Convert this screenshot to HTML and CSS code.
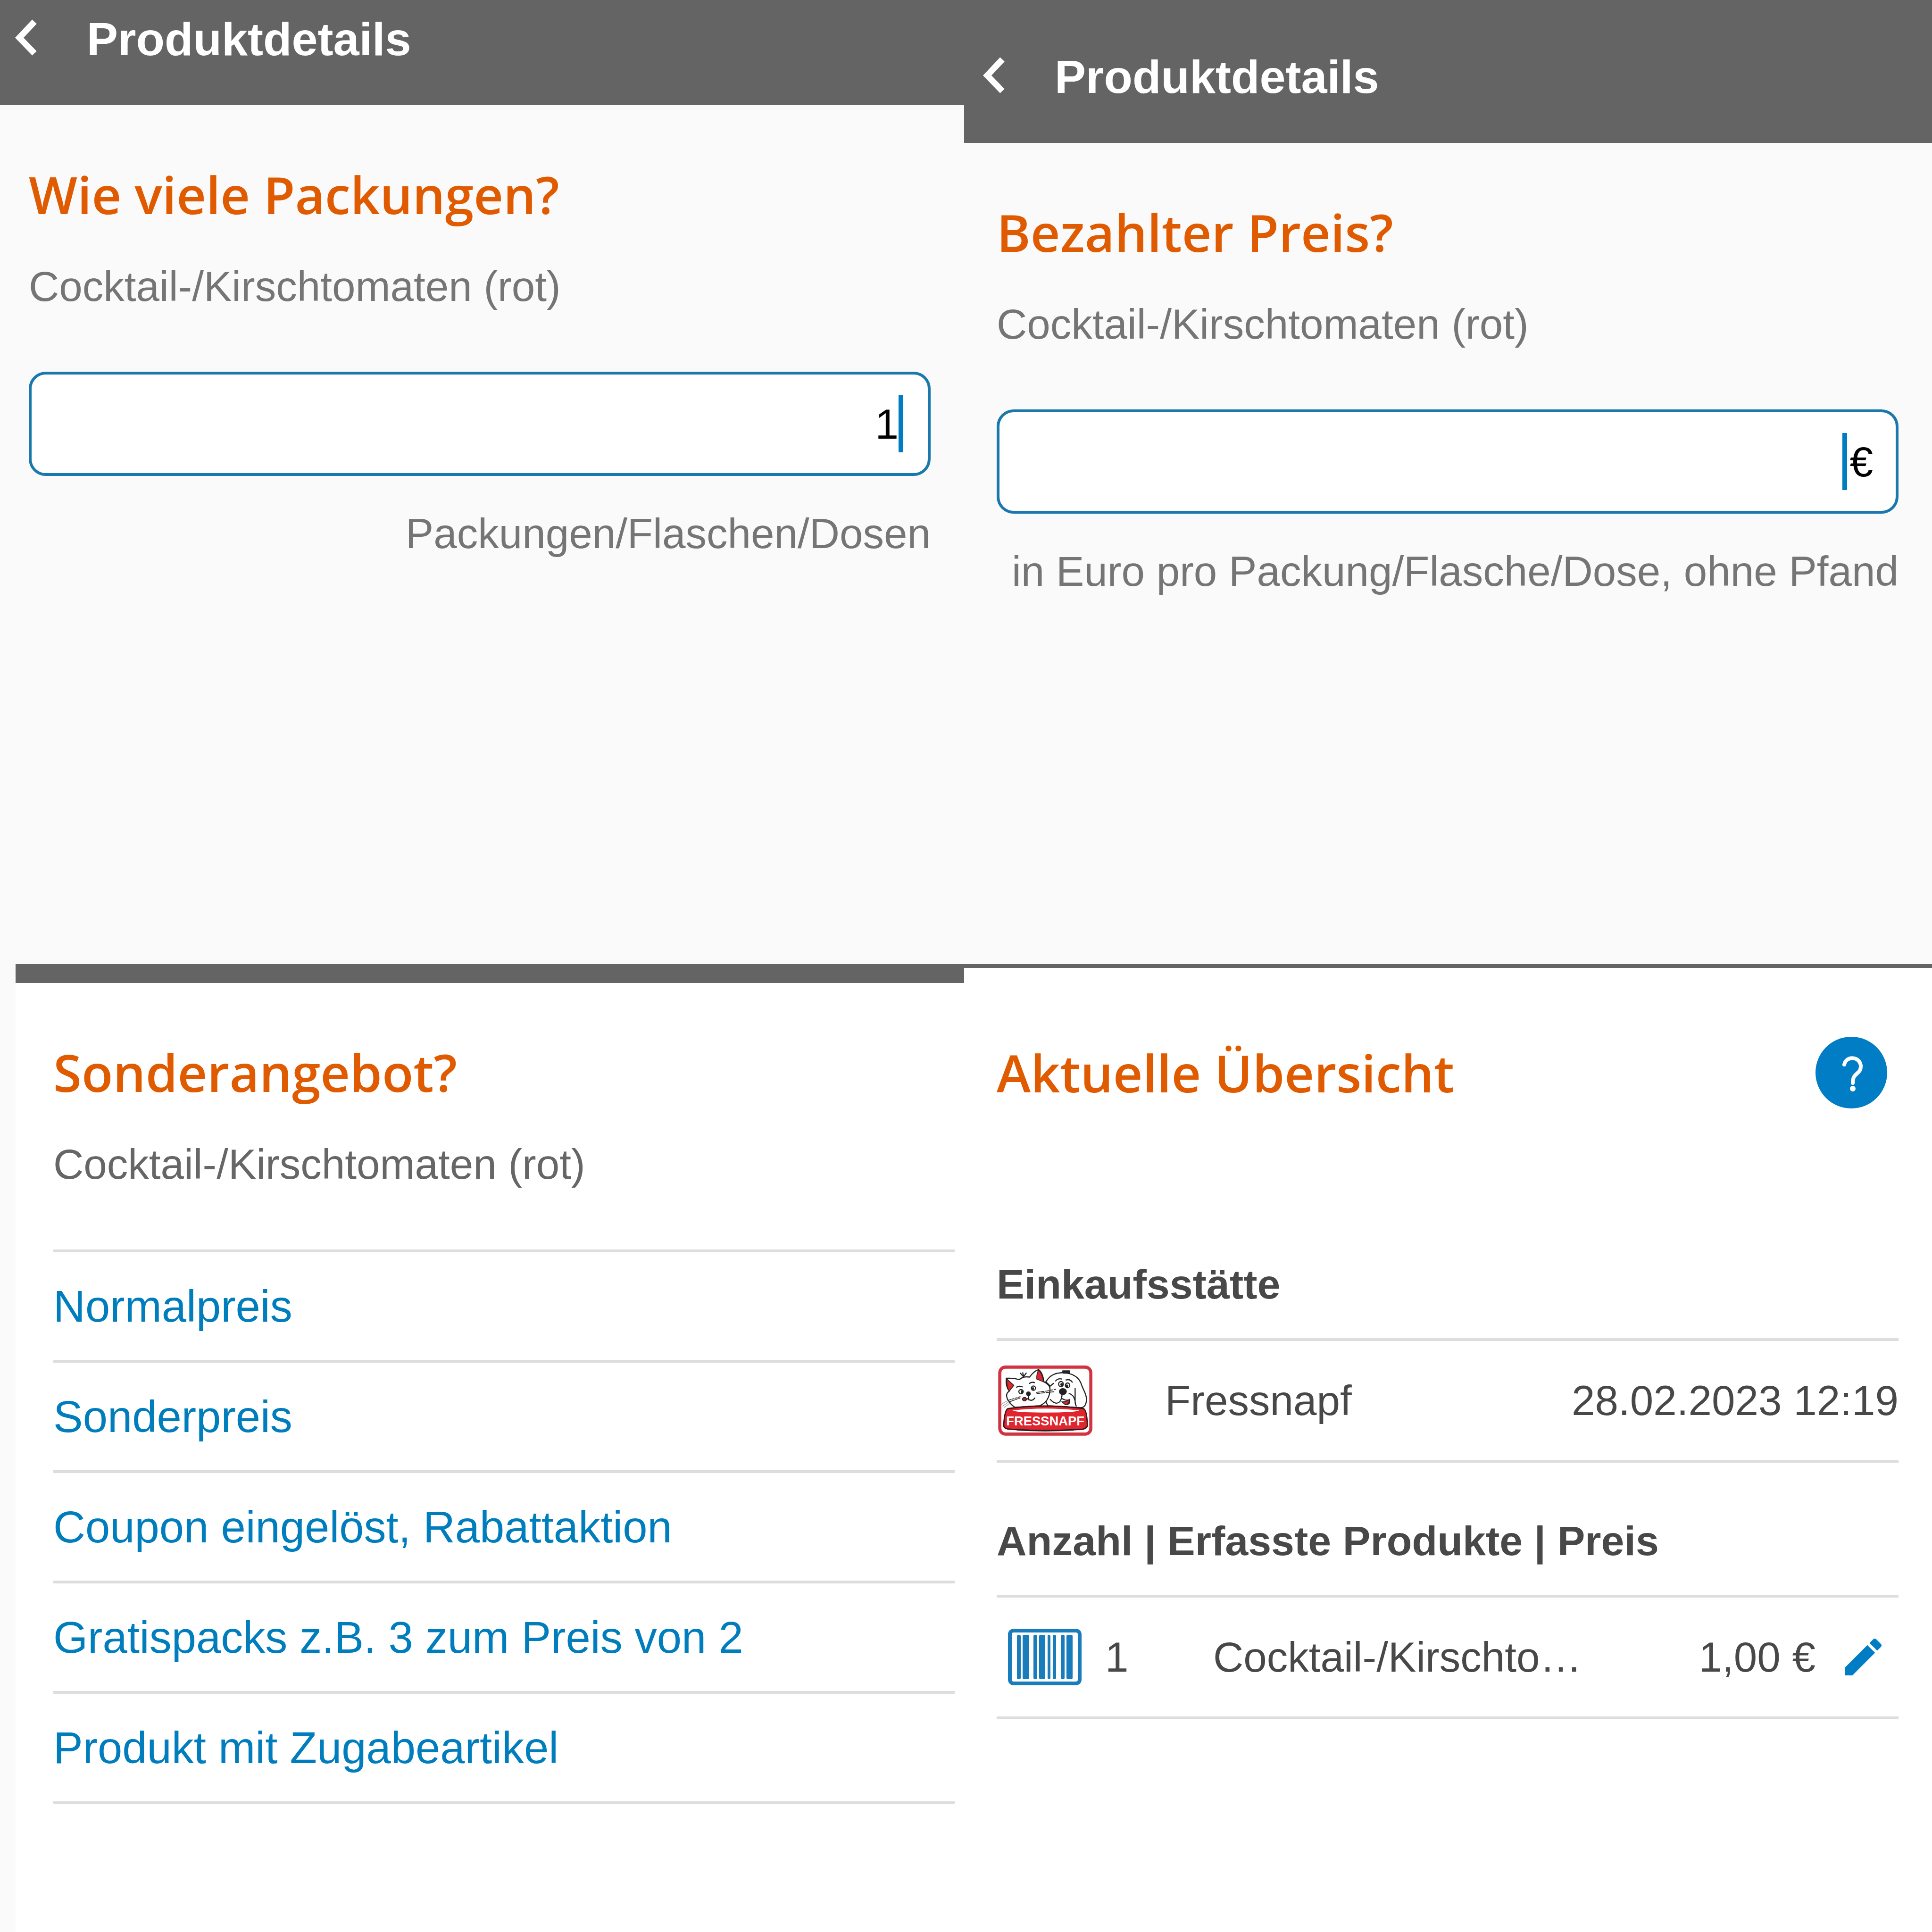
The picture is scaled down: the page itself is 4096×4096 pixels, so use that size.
FILE: index.html
```
<!DOCTYPE html>
<html lang="de">
<head>
    <meta charset="UTF-8">
    <meta name="viewport" content="width=device-width, initial-scale=1.0">
    <title>Produktdetails</title>
    <link rel="stylesheet" href="styles.css">
</head>
<body>
    <!-- Anzahl -->
    <section class="panel">
        <header class="topbar">
            <button class="back" aria-label="Zurück">
                <svg width="46" height="84" viewBox="0 0 46 84"><path d="M41 5 L9 39 L41 72" fill="none" stroke="#fff" stroke-width="13"/></svg>
            </button>
            <h1>Produktdetails</h1>
        </header>
        <div class="content">
            <h2>Wie viele Packungen?</h2>
            <p class="product">Cocktail-/Kirschtomaten (rot)</p>
            <div class="field">
                <input type="text" id="amount" value="1">
                <span class="caret"></span>
            </div>
            <label class="hint" for="amount">Packungen/Flaschen/Dosen</label>
        </div>
    </section>

    <!-- Preis -->
    <section class="panel panel-price">
        <header class="topbar">
            <button class="back" aria-label="Zurück">
                <svg width="46" height="84" viewBox="0 0 46 84"><path d="M41 5 L9 39 L41 72" fill="none" stroke="#fff" stroke-width="13"/></svg>
            </button>
            <h1>Produktdetails</h1>
        </header>
        <div class="content">
            <h2>Bezahlter Preis?</h2>
            <p class="product">Cocktail-/Kirschtomaten (rot)</p>
            <div class="field">
                <input type="text" id="price">
                <span class="caret"></span>
                <span class="unit">€</span>
            </div>
            <label class="hint" for="price">in Euro pro Packung/Flasche/Dose, ohne Pfand</label>
        </div>
    </section>

    <!-- Sonderangebot -->
    <section class="panel panel-offer">
        <div class="content">
            <h2>Sonderangebot?</h2>
            <p class="product">Cocktail-/Kirschtomaten (rot)</p>
            <ul class="options">
                <li><a href="#normalpreis">Normalpreis</a></li>
                <li><a href="#sonderpreis">Sonderpreis</a></li>
                <li><a href="#coupon">Coupon eingelöst, Rabattaktion</a></li>
                <li><a href="#gratispacks">Gratispacks z.B. 3 zum Preis von 2</a></li>
                <li><a href="#zugabe">Produkt mit Zugabeartikel</a></li>
            </ul>
        </div>
    </section>

    <!-- Übersicht -->
    <section class="panel panel-overview">
        <div class="content">
            <div class="overview-head">
                <h2>Aktuelle Übersicht</h2>
                <button class="help" aria-label="Hilfe">
                    <svg width="152" height="152" viewBox="0 0 152 152">
                        <circle cx="76" cy="76" r="76" fill="#007dc5"/>
                        <path d="M61 59 C64 41 93 40 96 61 C97 81 79 74 79 98" fill="none" stroke="#fff" stroke-width="8" stroke-linecap="round"/>
                        <circle cx="79" cy="110" r="6" fill="#fff"/>
                    </svg>
                </button>
            </div>

            <h3>Einkaufsstätte</h3>
            <div class="row row-store">
                <svg class="logo" width="200" height="150" viewBox="108 101 600 450" role="img" aria-label="Fressnapf">
                    <rect x="119" y="114" width="579" height="426" rx="36" fill="#fff" stroke="#cf3440" stroke-width="20"/>
                    <g fill="#fff" stroke="#222" stroke-width="7" stroke-linecap="round" stroke-linejoin="round">
                        <path d="M412 208 C440 160 480 148 530 150 C590 156 626 180 640 230 C655 270 672 290 670 325 C668 355 655 372 635 372 L425 360 C400 320 400 260 412 208Z"/>
                        <path d="M598 250 V330 Q598 350 605 362 M560 282 Q590 290 598 330 M412 208 Q430 225 440 235 L460 218"/>
                        <path d="M160 185 Q205 182 242 194 Q270 170 308 178 Q335 140 366 130 Q392 150 400 208 Q440 228 438 255 C438 310 410 345 372 360 L215 370 Q165 335 162 295 Q162 278 180 266 Q155 240 160 185Z"/>
                        <path d="M250 153 L268 174 M265 150 L270 174 M287 152 L272 172"/>
                        <path d="M520 140 H562 M524 150 H560" stroke-width="11"/>
                    </g>
                    <path d="M164 190 L208 230 L179 267 Q160 240 164 190Z M366 133 Q390 155 398 208 L354 190 Q352 155 366 133Z" fill="#e0252f" stroke="#222" stroke-width="5"/>
                    <g fill="none" stroke="#222" stroke-width="7" stroke-linecap="round">
                        <path d="M226 242 Q242 230 262 240 M308 218 Q322 206 340 213"/>
                        <ellipse cx="254" cy="270" rx="14" ry="13"/>
                        <ellipse cx="333" cy="248" rx="13" ry="14"/>
                        <path d="M259 268 V274 M330 248 V253" stroke-width="12"/>
                        <path d="M300 290 L304 322 Q328 332 342 310 M302 312 Q285 325 270 314"/>
                        <path d="M474 202 Q490 184 513 190 M540 196 Q565 188 580 210"/>
                        <path d="M440 320 Q475 358 500 335 Q515 315 515 285 M515 315 Q540 330 562 322 Q570 345 548 352"/>
                        <path d="M130 350 L172 325 M138 362 L180 332 M148 370 L190 338" stroke="#999" stroke-width="4"/>
                        <path d="M175 325 L250 302 M180 335 L248 310" stroke-width="5" stroke-dasharray="14 7"/>
                        <path d="M350 275 L420 266 L475 255 M355 282 L470 270" stroke-width="5" stroke-dasharray="22 7"/>
                        <ellipse cx="508" cy="222" rx="15" ry="16"/>
                        <ellipse cx="550" cy="230" rx="14" ry="15"/>
                    </g>
                    <circle cx="513" cy="225" r="9" fill="#222"/>
                    <circle cx="546" cy="233" r="8" fill="#222"/>
                    <ellipse cx="301" cy="284" rx="15" ry="15" fill="#222"/>
                    <ellipse cx="520" cy="270" rx="25" ry="22" fill="#222"/>
                    <ellipse cx="276" cy="318" rx="13" ry="11" fill="#a3232b" stroke="#222" stroke-width="5"/>
                    <path d="M514 335 Q545 335 560 320 Q565 350 535 353Z" fill="#e0252f" stroke="#222" stroke-width="5"/>
                    <path d="M172 378 Q400 345 650 378 Q672 384 676 480 Q678 502 645 510 Q400 526 170 508 Q140 502 144 480 Q150 384 172 378Z" fill="#e0252f" stroke="#3a1518" stroke-width="8"/>
                    <path d="M200 390 Q400 366 625 390 Q600 403 410 403 Q230 404 200 390Z" fill="#fff"/>
                    <path d="M230 513 Q400 524 590 513" fill="none" stroke="#222" stroke-width="9"/>
                    <text x="160" y="486" class="logo-text">FRESSNAPF</text>
                </svg>
                <span class="store">Fressnapf</span>
                <time datetime="2023-02-28T12:19">28.02.2023 12:19</time>
            </div>

            <h3 class="products-title">Anzahl | Erfasste Produkte | Preis</h3>
            <div class="row row-product">
                <svg class="barcode" width="156" height="120" viewBox="0 0 156 120">
                    <rect x="4" y="4" width="148" height="112" rx="8" fill="#fff" stroke="#1a7dbb" stroke-width="8"/>
                    <g fill="#1a7dbb">
                        <rect x="19" y="13" width="8" height="94" rx="3"/>
                        <rect x="31" y="13" width="14" height="94" rx="3"/>
                        <rect x="54" y="13" width="8" height="94" rx="3"/>
                        <rect x="66" y="13" width="13" height="94" rx="3"/>
                        <rect x="84" y="13" width="6" height="94" rx="3"/>
                        <rect x="95" y="13" width="7" height="94" rx="3"/>
                        <rect x="112" y="13" width="8" height="94" rx="3"/>
                        <rect x="124" y="13" width="13" height="94" rx="3"/>
                    </g>
                </svg>
                <span class="count">1</span>
                <span class="name">Cocktail-/Kirschto…</span>
                <span class="sum">1,00 €</span>
                <button class="edit" aria-label="Bearbeiten">
                    <svg width="78" height="78" viewBox="3 3 18 18"><path fill="#007dc5" d="M3 17.25V21h3.75L17.81 9.94l-3.75-3.75L3 17.25zM20.71 7.04a1 1 0 0 0 0-1.41l-2.34-2.34a1 1 0 0 0-1.41 0l-1.83 1.83 3.75 3.75 1.83-1.83z"/></svg>
                </button>
            </div>
        </div>
    </section>
</body>
</html>
```
FILE: styles.css
```
/* Global Styles */
* {
    margin: 0;
    padding: 0;
    box-sizing: border-box;
}

body {
    display: grid;
    grid-template-columns: 511fr 513fr;
    grid-template-rows: 511fr 513fr;
    min-height: 100vh;
    background-color: #fafafa;
    color: #484848;
    font-family: "Liberation Sans", Arial, sans-serif;
    font-size: 89px;
    line-height: 110px;
}

button {
    display: block;
    flex: none;
    border: none;
    background: none;
    cursor: pointer;
}

svg {
    display: block;
    flex: none;
}

/* Header */
.topbar {
    display: flex;
    align-items: center;
    gap: 106px;
    padding: 23px 32px 80px;
    background-color: #646464;
    color: white;
}

.panel-price .topbar {
    padding: 103px 40px 80px;
}

h1 {
    font-size: 99px;
    line-height: 120px;
}

/* Panels */
.panel {
    min-width: 0;
}

.content {
    padding: 119px 71px 0 61px;
}

.panel-price .content {
    padding-left: 69px;
}

h2 {
    color: #e05a00;
    font-family: "Open Sans", sans-serif;
    font-size: 109px;
    font-weight: 600;
    line-height: 140px;
}

h3 {
    font-size: 88px;
    line-height: 110px;
}

.product {
    margin-top: 70px;
    color: #757575;
}

/* Input */
.field {
    display: flex;
    align-items: center;
    height: 221px;
    margin: 126px 0 67px;
    padding: 0 52px;
    background-color: white;
    border: 6px solid #1a78ad;
    border-radius: 36px;
    color: black;
}

.panel-price .field {
    padding-right: 48px;
}

.field input {
    flex: 1;
    min-width: 0;
    border: none;
    outline: none;
    background: none;
    color: inherit;
    font: inherit;
    text-align: right;
}

.caret {
    width: 10px;
    height: 121px;
    background-color: #007cc0;
}

.unit {
    margin-left: 6px;
}

.hint {
    display: block;
    color: #757575;
    text-align: right;
}

/* Sonderangebot */
.panel-offer {
    margin-left: 33px;
    background-color: white;
    border-top: 40px solid #646464;
}

.panel-offer .content {
    padding: 119px 20px 0 80px;
}

.panel-offer .product {
    color: #666;
}

.options {
    margin-top: 126px;
    border-top: 6px solid #ddd;
    list-style: none;
}

.options li {
    border-bottom: 6px solid #ddd;
}

.options a {
    display: block;
    padding: 60px 0 58px;
    color: #007dbd;
    font-size: 94px;
    text-decoration: none;
}

/* Uebersicht */
.panel-overview {
    background-color: white;
    border-top: 8px solid #646464;
}

.panel-overview .content {
    padding: 146px 71px 0 69px;
}

.overview-head {
    display: flex;
    align-items: center;
    justify-content: space-between;
    padding-right: 24px;
    margin-bottom: 318px;
}

.row {
    display: flex;
    align-items: center;
    height: 264px;
    margin-top: 59px;
    border-top: 6px solid #ddd;
    border-bottom: 6px solid #ddd;
}

.row-store {
    padding-left: 3px;
}

.store {
    flex: 1;
    margin-left: 154px;
}

.logo-text {
    fill: white;
    font-size: 82px;
    font-weight: bold;
}

.products-title {
    margin-top: 111px;
}

.row-product {
    padding: 0 36px 0 24px;
}

.count {
    width: 229px;
    margin-left: 50px;
}

.name {
    flex: 1;
    overflow: hidden;
    text-overflow: ellipsis;
    white-space: nowrap;
}

.sum {
    width: 460px;
    margin-right: 62px;
    text-align: right;
}
```
